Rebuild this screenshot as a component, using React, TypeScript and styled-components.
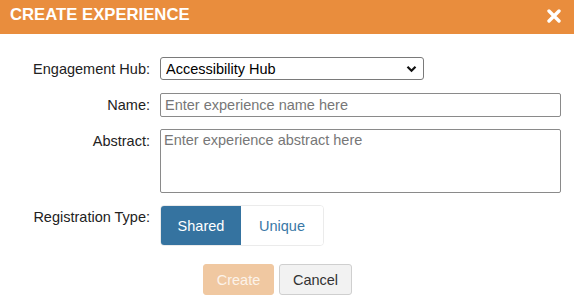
import styled, { createGlobalStyle } from 'styled-components';

const GlobalStyle = createGlobalStyle`
  html, body {
    margin: 0;
    padding: 0;
    background: #ffffff;
  }
  body {
    font-family: "Liberation Sans", Arial, Helvetica, sans-serif;
    color: #222;
  }
`;

const font = '"Liberation Sans", Arial, Helvetica, sans-serif';

const Dialog = styled.div`
  width: 574px;
  height: 308px;
  background: #fff;
  display: flex;
  flex-direction: column;
`;

const Header = styled.div`
  height: 34px;
  background: #e98d3d;
  display: flex;
  align-items: flex-start;
  justify-content: space-between;
  padding: 0 12px 0 10px;
`;

const Title = styled.h1`
  margin: 0;
  font-family: ${font};
  font-size: 16.7px;
  line-height: 30px;
  font-weight: bold;
  color: #fff;
  letter-spacing: 0;
`;

const CloseButton = styled.button`
  border: 0;
  background: none;
  padding: 0;
  margin-top: 9px;
  width: 16px;
  height: 14px;
  cursor: pointer;
  display: flex;
  align-items: center;
  justify-content: center;
`;

const Form = styled.form`
  display: grid;
  grid-template-columns: 150px 1fr;
  column-gap: 10px;
  row-gap: 12px;
  padding: 23px 13px 0 0;
  align-items: start;
`;

const Label = styled.label`
  font-family: ${font};
  font-size: 14.5px;
  line-height: 24px;
  color: #222;
  text-align: right;
  white-space: nowrap;
`;

const SelectWrap = styled.div`
  position: relative;
  width: 264px;
  height: 23px;
`;

const Select = styled.select`
  appearance: none;
  width: 100%;
  height: 100%;
  box-sizing: border-box;
  border: 1px solid #7a7a7a;
  border-radius: 3px;
  background: #fff;
  padding: 0 24px 0 5px;
  font-family: ${font};
  font-size: 14.5px;
  color: #000;
  margin: 0;
`;

const Chevron = styled.svg`
  position: absolute;
  right: 7px;
  top: 8px;
  pointer-events: none;
`;

const TextInput = styled.input`
  box-sizing: border-box;
  width: 401px;
  height: 24px;
  border: 1px solid #8a8a8a;
  border-radius: 2px;
  padding: 0 4px;
  margin: 0;
  font-family: ${font};
  font-size: 14.5px;
  color: #222;
  &::placeholder {
    color: #777;
  }
`;

const TextArea = styled.textarea`
  box-sizing: border-box;
  width: 401px;
  height: 64px;
  border: 1px solid #8a8a8a;
  border-radius: 2px;
  padding: 2px 3px;
  margin: 0;
  resize: none;
  font-family: ${font};
  font-size: 14.5px;
  line-height: 17px;
  color: #222;
  &::placeholder {
    color: #777;
  }
`;

const Toggle = styled.div`
  display: inline-flex;
  width: 164px;
  height: 41px;
  box-sizing: border-box;
  border: 1px solid #ebebeb;
  border-radius: 4px;
  overflow: hidden;
`;

const ToggleOption = styled.button<{ $active?: boolean }>`
  border: 0;
  margin: 0;
  padding: 0;
  width: ${(p) => (p.$active ? '80px' : '82px')};
  height: 100%;
  background: ${(p) => (p.$active ? '#3573a0' : '#fff')};
  color: ${(p) => (p.$active ? '#fff' : '#3a78a6')};
  font-family: ${font};
  font-size: 14.5px;
  cursor: pointer;
`;

const Actions = styled.div`
  display: flex;
  justify-content: center;
  gap: 5px;
  padding: 18px 19px 0 0;
`;

const Button = styled.button<{ $primary?: boolean }>`
  height: 31px;
  box-sizing: border-box;
  border-radius: 3px;
  margin: 0;
  font-family: ${font};
  font-size: 14.5px;
  cursor: pointer;
  width: ${(p) => (p.$primary ? '71px' : '73px')};
  border: 1px solid ${(p) => (p.$primary ? '#f0c8a1' : '#cfcfcf')};
  background: ${(p) => (p.$primary ? '#f0c8a1' : '#f2f2f2')};
  color: ${(p) => (p.$primary ? '#fcf3ea' : '#333')};
  &:disabled {
    cursor: default;
  }
`;

export default function App(): JSX.Element {
  return (
    <>
      <GlobalStyle />
      <Dialog>
        <Header>
          <Title>CREATE EXPERIENCE</Title>
          <CloseButton type="button" aria-label="Close">
            <svg width="14" height="14" viewBox="0 0 14 14">
              <path
                d="M2 2 L12 12 M12 2 L2 12"
                stroke="#fff"
                strokeWidth="3.4"
                strokeLinecap="round"
              />
            </svg>
          </CloseButton>
        </Header>
        <Form onSubmit={(e) => e.preventDefault()}>
          <Label htmlFor="hub">Engagement Hub:</Label>
          <SelectWrap>
            <Select id="hub" defaultValue="accessibility">
              <option value="accessibility">Accessibility Hub</option>
            </Select>
            <Chevron width="11" height="8" viewBox="0 0 11 8">
              <path
                d="M1.5 1.8 L5.5 5.8 L9.5 1.8"
                fill="none"
                stroke="#111"
                strokeWidth="2.2"
              />
            </Chevron>
          </SelectWrap>

          <Label htmlFor="name">Name:</Label>
          <TextInput id="name" placeholder="Enter experience name here" />

          <Label htmlFor="abstract">Abstract:</Label>
          <TextArea id="abstract" placeholder="Enter experience abstract here" />

          <Label>Registration Type:</Label>
          <div>
            <Toggle>
              <ToggleOption type="button" $active>
                Shared
              </ToggleOption>
              <ToggleOption type="button">Unique</ToggleOption>
            </Toggle>
          </div>
        </Form>
        <Actions>
          <Button type="button" $primary disabled>
            Create
          </Button>
          <Button type="button">Cancel</Button>
        </Actions>
      </Dialog>
    </>
  );
}
